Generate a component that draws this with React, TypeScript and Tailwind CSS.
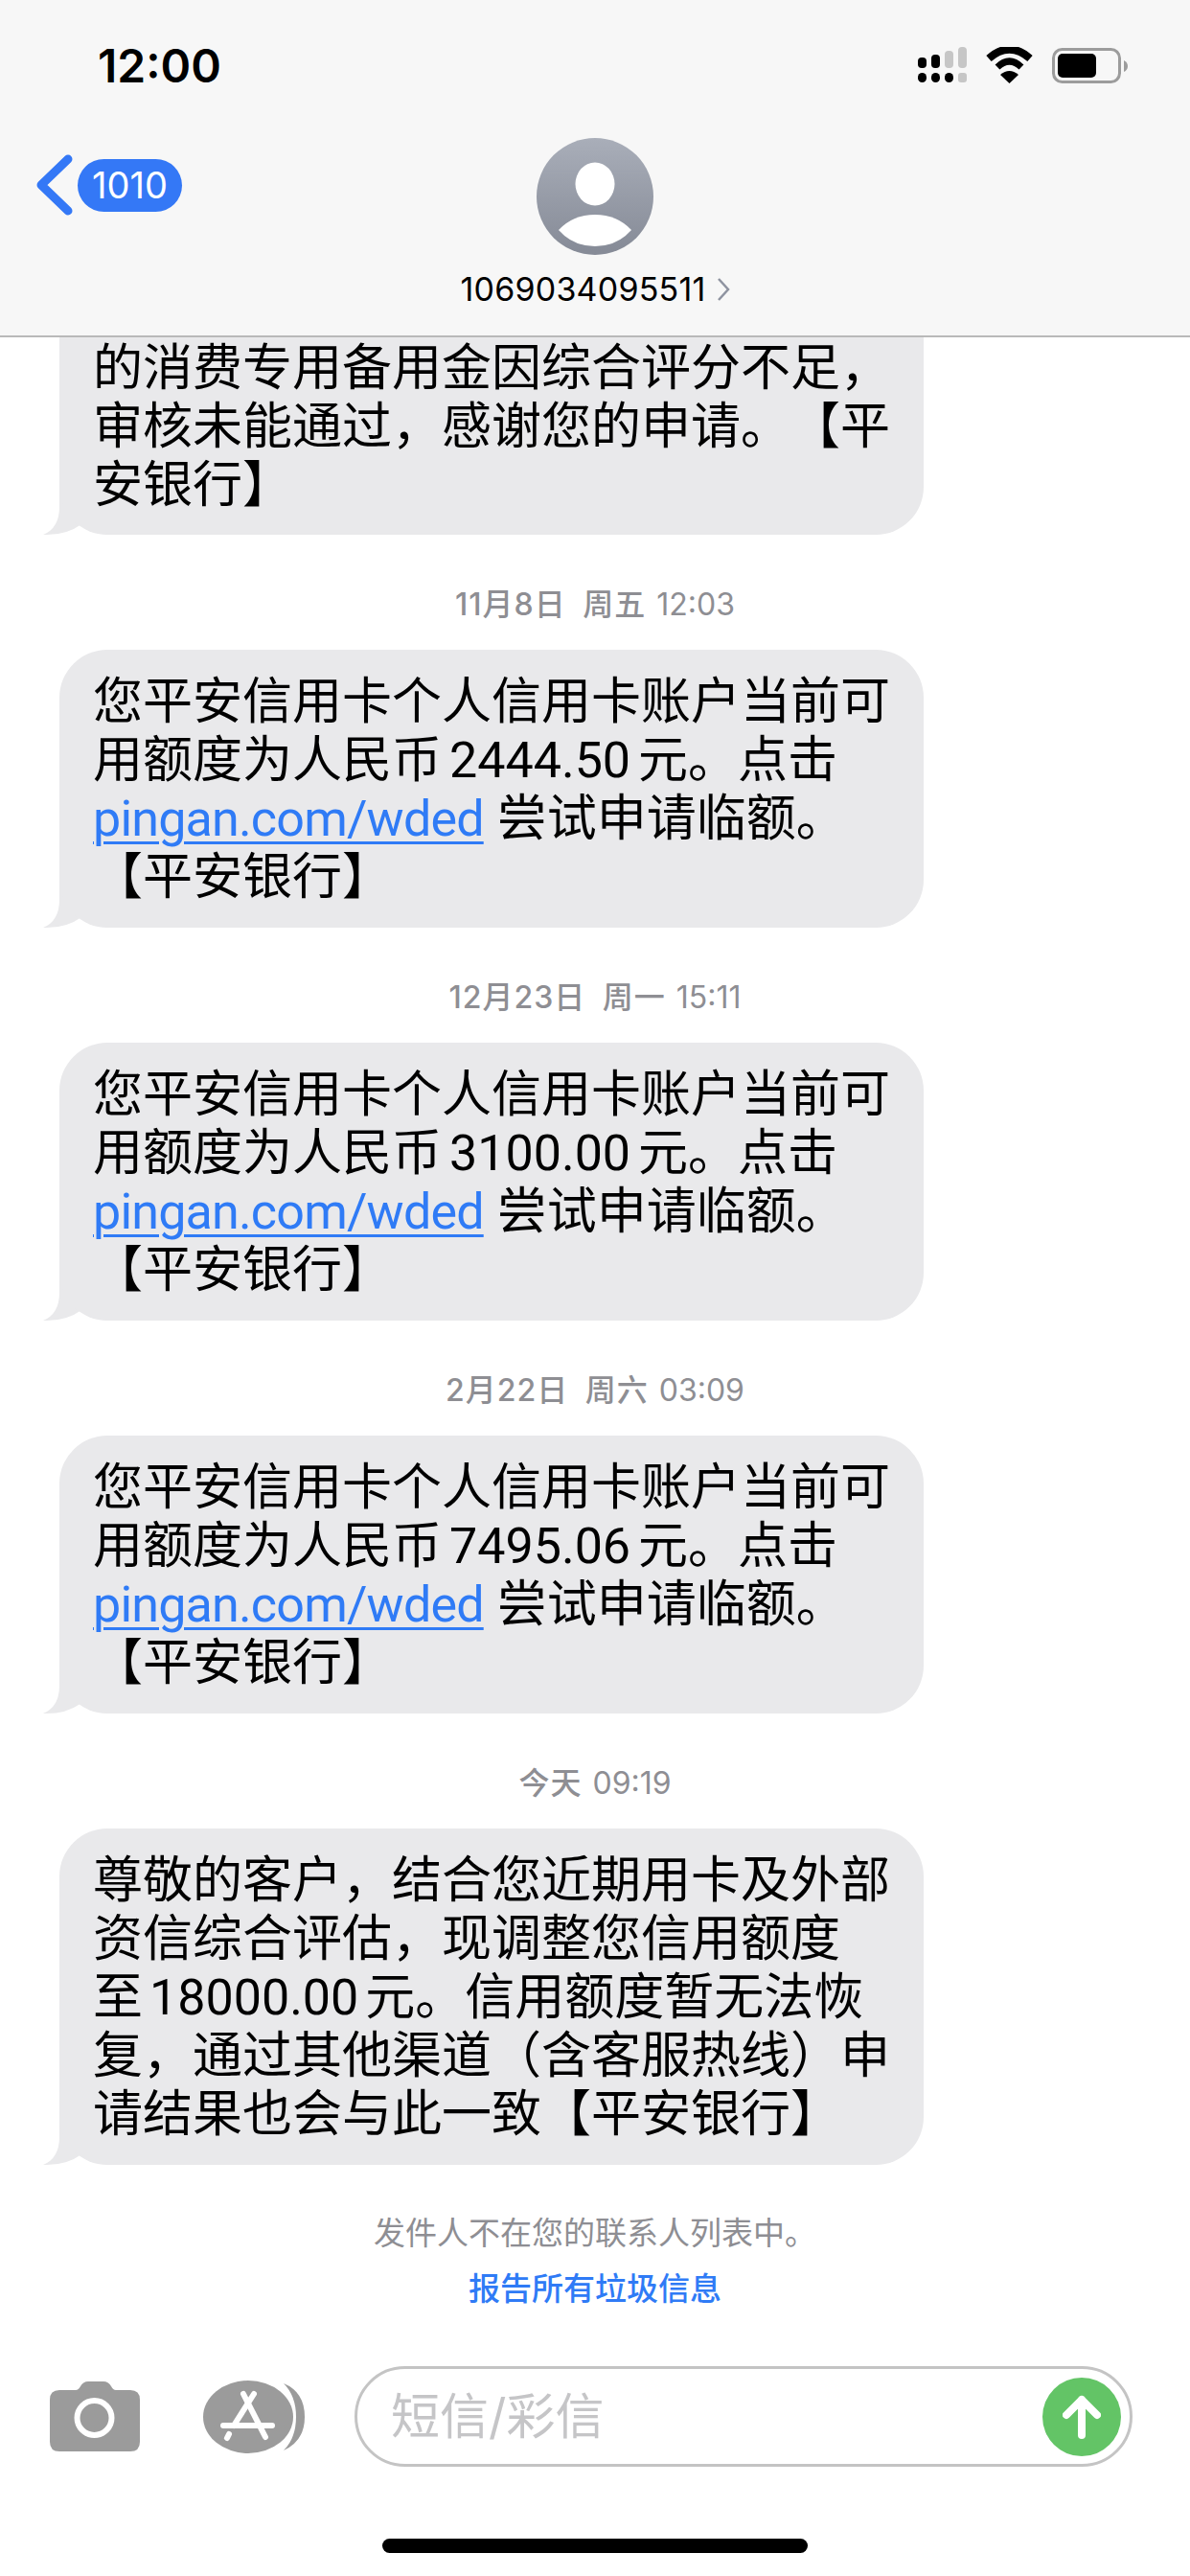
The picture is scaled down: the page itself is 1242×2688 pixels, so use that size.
import React from "react";

const cjk = "font-['Inter','Noto_Sans_CJK_SC',sans-serif]";

function StatusIcons(): React.JSX.Element {
    return (
        <svg width="222" height="40" viewBox="0 0 222 40" className="block">
            {/* signal */}
            <rect x="3" y="11" width="9" height="11" rx="4" fill="#000" />
            <rect x="17" y="8" width="9" height="14" rx="4" fill="#000" />
            <rect x="31" y="4" width="9" height="18" rx="4" fill="#c6c6c6" />
            <rect x="45" y="0" width="9" height="22" rx="4" fill="#c6c6c6" />
            <rect x="3" y="27" width="9" height="10" rx="4.5" fill="#000" />
            <rect x="17" y="27" width="9" height="10" rx="4.5" fill="#000" />
            <rect x="31" y="27" width="9" height="10" rx="4.5" fill="#000" />
            <rect x="45" y="27" width="9" height="10" rx="3" fill="#c6c6c6" />
            {/* wifi */}
            <path d="M77 12 Q98.5 -7 120 12" fill="none" stroke="#000" strokeWidth="8" />
            <path d="M86 21 Q98.5 9 111 21" fill="none" stroke="#000" strokeWidth="7" />
            <path d="M98.5 38 L89 29 Q98.5 21 108 29 Z" fill="#000" />
            {/* battery */}
            <rect x="144.5" y="2.5" width="69" height="34" rx="9" fill="none" stroke="#9c9c9c" strokeWidth="3" />
            <rect x="149" y="7" width="40" height="25" rx="5" fill="#000" />
            <path d="M218 14 Q222 16 222 20 Q222 24 218 26 Z" fill="#9c9c9c" />
        </svg>
    );
}

function Avatar(): React.JSX.Element {
    return (
        <svg width="122" height="122" viewBox="0 0 122 122" className="block">
            <defs>
                <linearGradient id="avatarBg" x1="0" y1="0" x2="0" y2="1">
                    <stop offset="0" stopColor="#a9aeb9" />
                    <stop offset="1" stopColor="#858a96" />
                </linearGradient>
            </defs>
            <circle cx="61" cy="61" r="61" fill="url(#avatarBg)" />
            <ellipse cx="61" cy="48" rx="20.5" ry="22.5" fill="#fff" />
            <path d="M23 96 Q38 80 61 80 Q84 80 99 96 Q84 113 61 113 Q38 113 23 96 Z" fill="#fff" />
        </svg>
    );
}

function Camera(): React.JSX.Element {
    return (
        <svg width="94" height="73" viewBox="0 0 94 73" className="block">
            <path
                d="M10 9 H27 Q30 9 32 5 Q35 0 40 0 H56 Q61 0 64 5 Q66 9 69 9 H84 Q94 9 94 19 V63 Q94 73 84 73 H10 Q0 73 0 63 V19 Q0 9 10 9 Z"
                fill="#9b9b9b"
            />
            <circle cx="46.5" cy="38" r="18" fill="none" stroke="#fff" strokeWidth="6" />
        </svg>
    );
}

function AppStore(): React.JSX.Element {
    return (
        <svg width="106" height="76" viewBox="0 0 106 76" className="block">
            <path d="M84 3 Q106 12 106 38 Q106 63 84 73 Q97 60 97 38 Q97 16 84 3 Z" fill="#9b9b9b" />
            <ellipse cx="47" cy="38" rx="47" ry="38" fill="#9b9b9b" />
            <g stroke="#fff" strokeWidth="6" strokeLinecap="round" fill="none">
                <path d="M42 14 L65 59" />
                <path d="M53 14 L32 47" />
                <path d="M21 47 H72" />
                <path d="M27 56 L25 60" />
            </g>
        </svg>
    );
}

function Bubble({ lines, cut }: { lines: React.ReactNode[]; cut?: boolean }): React.JSX.Element {
    return (
        <div className="relative ml-[62px] w-[902px]">
            {/* tail */}
            <svg width="50" height="50" viewBox="0 0 50 50" className="absolute left-[-17px] bottom-[-1px]">
                <path d="M17 0 V20 Q17 42 0 49 Q24 50 40 38 L50 0 Z" fill="#e9e9eb" />
            </svg>
            <div
                className={
                    cut
                        ? "relative bg-[#e9e9eb] rounded-b-[50px] pl-[35px] pt-[2px] pb-[21px] text-[52px] leading-[61px] text-black font-['Roboto','Noto_Sans_CJK_SC',sans-serif] [text-spacing-trim:space-all]"
                        : "relative bg-[#e9e9eb] rounded-[50px] pl-[35px] pt-[24px] pb-[22px] text-[52px] leading-[61px] text-black font-['Roboto','Noto_Sans_CJK_SC',sans-serif] [text-spacing-trim:space-all]"
                }
            >
                {lines.map((line, i) => (
                    <div key={i} className="whitespace-nowrap">
                        {line}
                    </div>
                ))}
            </div>
        </div>
    );
}

function DateLabel({ day, time }: { day: string; time: string }): React.JSX.Element {
    return (
        <div className="mt-[51px] mb-[25px] h-[44px] flex items-center justify-center text-[32px] text-[#8e8e93] whitespace-nowrap">
            <span className="font-medium tracking-[1px] [word-spacing:8px]">{day}</span>
            <span className="ml-[11px]">{time}</span>
        </div>
    );
}

function creditLines(amount: string): React.ReactNode[] {
    return [
        "您平安信用卡个人信用卡账户当前可",
        <>
            用额度为人民币<span className="mx-[8px]">{amount}</span>元。点击
        </>,
        <>
            <span className="text-[#2f7bf6] tracking-[-0.8px] underline decoration-[3px] underline-offset-[6px]">pingan.com/wded</span>
            <span className="ml-[14px]">尝试申请临额。</span>
        </>,
        "【平安银行】",
    ];
}

function App(): React.JSX.Element {
    return (
        <div className={`${cjk} w-[1242px] h-[2688px] bg-white overflow-hidden flex flex-col`}>
            <div className="h-[352px] shrink-0 bg-[#f7f7f7] border-b-2 border-[#b9b9b9] flex flex-col">
                <div className="flex items-center justify-between pl-[102px] pr-[65px] pt-[40px] h-[98px]">
                    <div className="text-[48px] font-semibold text-black leading-none">12:00</div>
                    <StatusIcons />
                </div>
                <div className="relative flex flex-col items-center pt-[46px]">
                    <Avatar />
                    <div className="mt-[16px] flex items-center h-[40px]">
                        <span className="text-[34px] tracking-[0.2px] text-black leading-none">1069034095511</span>
                        <svg width="14" height="26" viewBox="0 0 14 26" className="ml-[11px]">
                            <path d="M2 2 L12 13 L2 24" fill="none" stroke="#8e93a0" strokeWidth="2.5" />
                        </svg>
                    </div>
                    <div className="absolute left-[38px] top-[63px] flex items-center">
                        <svg width="38" height="64" viewBox="0 0 38 64" className="block">
                            <path d="M33 5 L5 32 L33 59" fill="none" stroke="#3478f6" strokeWidth="9" strokeLinecap="round" strokeLinejoin="round" />
                        </svg>
                        <div className="ml-[5px] w-[109px] h-[55px] rounded-full bg-[#3478f6] flex items-center justify-center text-[38px] text-white leading-none">
                            1010
                        </div>
                    </div>
                </div>
            </div>

            <Bubble
                cut
                lines={["的消费专用备用金因综合评分不足，", "审核未能通过，感谢您的申请。【平", "安银行】"]}
            />
            <DateLabel day="11月8日 周五" time="12:03" />
            <Bubble lines={creditLines("2444.50")} />
            <DateLabel day="12月23日 周一" time="15:11" />
            <Bubble lines={creditLines("3100.00")} />
            <DateLabel day="2月22日 周六" time="03:09" />
            <Bubble lines={creditLines("7495.06")} />
            <DateLabel day="今天" time="09:19" />
            <Bubble
                lines={[
                    "尊敬的客户，结合您近期用卡及外部",
                    "资信综合评估，现调整您信用额度",
                    <>
                        至<span className="mx-[7px]">18000.00</span>元。信用额度暂无法恢
                    </>,
                    "复，通过其他渠道（含客服热线）申",
                    "请结果也会与此一致【平安银行】",
                ]}
            />

            <div className="mt-[42px] flex flex-col items-center text-[33px] leading-[58px]">
                <div className="text-[#8e8e93]">发件人不在您的联系人列表中。</div>
                <div className="text-[#2f7bf6] font-medium">报告所有垃圾信息</div>
            </div>

            <div className="mt-[52px] flex items-center pl-[52px]">
                <Camera />
                <div className="ml-[66px]">
                    <AppStore />
                </div>
                <div className="ml-[52px] w-[812px] h-[105px] rounded-full border-[3px] border-[#c4c4c4] flex items-center justify-between pl-[35px] pr-[9px]">
                    <span className="text-[51px] text-[#c5c5c7] leading-none">短信/彩信</span>
                    <div className="w-[82px] h-[82px] rounded-full bg-[#63c466] flex items-center justify-center">
                        <svg width="40" height="46" viewBox="0 0 40 46">
                            <path d="M20 42 V5 M4 21 L20 5 L36 21" fill="none" stroke="#fff" strokeWidth="8" strokeLinecap="round" strokeLinejoin="round" />
                        </svg>
                    </div>
                </div>
            </div>

            <div className="mt-auto mb-[24px] mx-auto w-[444px] h-[15px] rounded-full bg-black" />
        </div>
    );
}

export default App;
